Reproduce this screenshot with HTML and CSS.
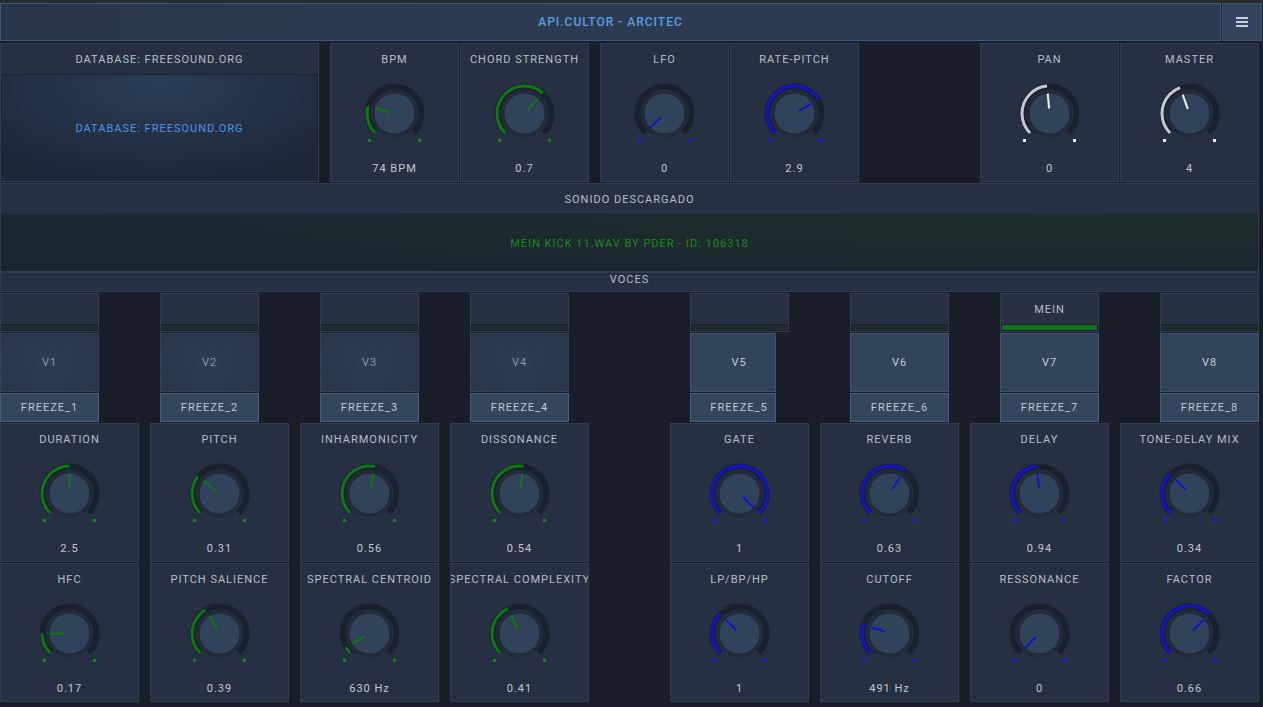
FILE: index.html
```html
<!DOCTYPE html>
<html lang="es">
<head>
<meta charset="utf-8">
<title>API.CULTOR - ARCITEC</title>
<link rel="stylesheet" href="styles.css">
</head>
<body>
<div class="topstrip"></div>
<header class="titlebar">
  <div class="title">API.CULTOR - ARCITEC</div>
  <button class="menu" aria-label="menu">
    <svg width="12" height="10" viewBox="0 0 12 10"><rect x="0" y="0" width="12" height="2"/><rect x="0" y="4" width="12" height="2"/><rect x="0" y="8" width="12" height="2"/></svg>
  </button>
</header>

<section class="row1">
  <div class="panel db">
    <div class="phead">DATABASE: FREESOUND.ORG</div>
    <div class="dbbox">DATABASE: FREESOUND.ORG</div>
  </div>

  <div class="panel kp narrow gap-l green">
    <div class="klabel"><span>BPM</span></div>
    <svg class="knob" viewBox="-40.5 -40.5 81 81" width="81" height="81"><circle class="trk" r="27" pathLength="360" stroke-dasharray="270 360" transform="rotate(135)"/><circle class="band" r="24"/><circle class="val" r="27.5" pathLength="360" stroke-dasharray="60 360" transform="rotate(135)"/><circle class="cap" r="20.5"/><line class="ptr" x1="0" y1="-5" x2="0" y2="-20" transform="rotate(-75)"/><rect class="dot" x="-26.5" y="25.5" width="3" height="3"/><rect class="dot" x="23.5" y="25.5" width="3" height="3"/></svg>
    <div class="kval">74 BPM</div>
  </div>
  <div class="panel kp narrow green">
    <div class="klabel"><span>CHORD STRENGTH</span></div>
    <svg class="knob" viewBox="-40.5 -40.5 81 81" width="81" height="81"><circle class="trk" r="27" pathLength="360" stroke-dasharray="270 360" transform="rotate(135)"/><circle class="band" r="24"/><circle class="val" r="27.5" pathLength="360" stroke-dasharray="177 360" transform="rotate(135)"/><circle class="cap" r="20.5"/><line class="ptr" x1="0" y1="-5" x2="0" y2="-20" transform="rotate(42)"/><rect class="dot" x="-26.5" y="25.5" width="3" height="3"/><rect class="dot" x="23.5" y="25.5" width="3" height="3"/></svg>
    <div class="kval">0.7</div>
  </div>

  <div class="panel kp narrow gap-l blue">
    <div class="klabel"><span>LFO</span></div>
    <svg class="knob" viewBox="-40.5 -40.5 81 81" width="81" height="81"><circle class="trk" r="27" pathLength="360" stroke-dasharray="270 360" transform="rotate(135)"/><circle class="band" r="24"/><circle class="val" r="27.5" pathLength="360" stroke-dasharray="0 360" transform="rotate(135)"/><circle class="cap" r="20.5"/><line class="ptr" x1="0" y1="-5" x2="0" y2="-20" transform="rotate(-135)"/><rect class="dot" x="-26.5" y="25.5" width="3" height="3"/><rect class="dot" x="23.5" y="25.5" width="3" height="3"/></svg>
    <div class="kval">0</div>
  </div>
  <div class="panel kp narrow blue">
    <div class="klabel"><span>RATE-PITCH</span></div>
    <svg class="knob" viewBox="-40.5 -40.5 81 81" width="81" height="81"><circle class="trk" r="27" pathLength="360" stroke-dasharray="270 360" transform="rotate(135)"/><circle class="band" r="24"/><circle class="val" r="27.5" pathLength="360" stroke-dasharray="195 360" transform="rotate(135)"/><circle class="cap" r="20.5"/><line class="ptr" x1="0" y1="-5" x2="0" y2="-20" transform="rotate(60)"/><rect class="dot" x="-26.5" y="25.5" width="3" height="3"/><rect class="dot" x="23.5" y="25.5" width="3" height="3"/></svg>
    <div class="kval">2.9</div>
  </div>

  <div class="panel kp gap-xl white">
    <div class="klabel"><span>PAN</span></div>
    <svg class="knob" viewBox="-40.5 -40.5 81 81" width="81" height="81"><circle class="trk" r="27" pathLength="360" stroke-dasharray="270 360" transform="rotate(135)"/><circle class="band" r="24"/><circle class="val" r="27.5" pathLength="360" stroke-dasharray="130 360" transform="rotate(135)"/><circle class="cap" r="20.5"/><line class="ptr" x1="0" y1="-5" x2="0" y2="-20" transform="rotate(-5)"/><rect class="dot" x="-26.5" y="25.5" width="3" height="3"/><rect class="dot" x="23.5" y="25.5" width="3" height="3"/></svg>
    <div class="kval">0</div>
  </div>
  <div class="panel kp white">
    <div class="klabel"><span>MASTER</span></div>
    <svg class="knob" viewBox="-40.5 -40.5 81 81" width="81" height="81"><circle class="trk" r="27" pathLength="360" stroke-dasharray="270 360" transform="rotate(135)"/><circle class="band" r="24"/><circle class="val" r="27.5" pathLength="360" stroke-dasharray="115 360" transform="rotate(135)"/><circle class="cap" r="20.5"/><line class="ptr" x1="0" y1="-5" x2="0" y2="-20" transform="rotate(-20)"/><rect class="dot" x="-26.5" y="25.5" width="3" height="3"/><rect class="dot" x="23.5" y="25.5" width="3" height="3"/></svg>
    <div class="kval">4</div>
  </div>
</section>

<section class="panel sonido">
  <div class="phead">SONIDO DESCARGADO</div>
  <div class="sbox">MEIN KICK 11.WAV BY PDER - ID: 106318</div>
</section>

<div class="panel voces">VOCES</div>

<section class="voices">
  <div class="voice">
    <div class="vtop"><div class="vname"></div><div class="vbar"></div></div>
    <div class="vbtn off">V1</div>
    <div class="freeze">FREEZE_1</div>
  </div>
  <div class="voice">
    <div class="vtop"><div class="vname"></div><div class="vbar"></div></div>
    <div class="vbtn off">V2</div>
    <div class="freeze">FREEZE_2</div>
  </div>
  <div class="voice">
    <div class="vtop"><div class="vname"></div><div class="vbar"></div></div>
    <div class="vbtn off">V3</div>
    <div class="freeze">FREEZE_3</div>
  </div>
  <div class="voice">
    <div class="vtop"><div class="vname"></div><div class="vbar"></div></div>
    <div class="vbtn off">V4</div>
    <div class="freeze">FREEZE_4</div>
  </div>
  <div class="voice">
    <div class="vtop"><div class="vname"></div><div class="vbar"></div></div>
    <div class="vbtn on short">V5</div>
    <div class="freeze short">FREEZE_5</div>
  </div>
  <div class="voice">
    <div class="vtop"><div class="vname"></div><div class="vbar"></div></div>
    <div class="vbtn on">V6</div>
    <div class="freeze">FREEZE_6</div>
  </div>
  <div class="voice">
    <div class="vtop"><div class="vname">MEIN</div><div class="vbar lit"></div></div>
    <div class="vbtn on">V7</div>
    <div class="freeze">FREEZE_7</div>
  </div>
  <div class="voice">
    <div class="vtop"><div class="vname"></div><div class="vbar"></div></div>
    <div class="vbtn on">V8</div>
    <div class="freeze">FREEZE_8</div>
  </div>
</section>

<section class="knobs">
  <div class="panel kp green">
    <div class="klabel"><span>DURATION</span></div>
    <svg class="knob" viewBox="-40.5 -40.5 81 81" width="81" height="81"><circle class="trk" r="27" pathLength="360" stroke-dasharray="270 360" transform="rotate(135)"/><circle class="band" r="24"/><circle class="val" r="27.5" pathLength="360" stroke-dasharray="135 360" transform="rotate(135)"/><circle class="cap" r="20.5"/><line class="ptr" x1="0" y1="-5" x2="0" y2="-20" transform="rotate(0)"/><rect class="dot" x="-26.5" y="25.5" width="3" height="3"/><rect class="dot" x="23.5" y="25.5" width="3" height="3"/></svg>
    <div class="kval">2.5</div>
  </div>
  <div class="panel kp green">
    <div class="klabel"><span>PITCH</span></div>
    <svg class="knob" viewBox="-40.5 -40.5 81 81" width="81" height="81"><circle class="trk" r="27" pathLength="360" stroke-dasharray="270 360" transform="rotate(135)"/><circle class="band" r="24"/><circle class="val" r="27.5" pathLength="360" stroke-dasharray="83 360" transform="rotate(135)"/><circle class="cap" r="20.5"/><line class="ptr" x1="0" y1="-5" x2="0" y2="-20" transform="rotate(-52)"/><rect class="dot" x="-26.5" y="25.5" width="3" height="3"/><rect class="dot" x="23.5" y="25.5" width="3" height="3"/></svg>
    <div class="kval">0.31</div>
  </div>
  <div class="panel kp green">
    <div class="klabel"><span>INHARMONICITY</span></div>
    <svg class="knob" viewBox="-40.5 -40.5 81 81" width="81" height="81"><circle class="trk" r="27" pathLength="360" stroke-dasharray="270 360" transform="rotate(135)"/><circle class="band" r="24"/><circle class="val" r="27.5" pathLength="360" stroke-dasharray="147 360" transform="rotate(135)"/><circle class="cap" r="20.5"/><line class="ptr" x1="0" y1="-5" x2="0" y2="-20" transform="rotate(12)"/><rect class="dot" x="-26.5" y="25.5" width="3" height="3"/><rect class="dot" x="23.5" y="25.5" width="3" height="3"/></svg>
    <div class="kval">0.56</div>
  </div>
  <div class="panel kp green">
    <div class="klabel"><span>DISSONANCE</span></div>
    <svg class="knob" viewBox="-40.5 -40.5 81 81" width="81" height="81"><circle class="trk" r="27" pathLength="360" stroke-dasharray="270 360" transform="rotate(135)"/><circle class="band" r="24"/><circle class="val" r="27.5" pathLength="360" stroke-dasharray="143 360" transform="rotate(135)"/><circle class="cap" r="20.5"/><line class="ptr" x1="0" y1="-5" x2="0" y2="-20" transform="rotate(8)"/><rect class="dot" x="-26.5" y="25.5" width="3" height="3"/><rect class="dot" x="23.5" y="25.5" width="3" height="3"/></svg>
    <div class="kval">0.54</div>
  </div>
  <div class="panel kp blue after-gap">
    <div class="klabel"><span>GATE</span></div>
    <svg class="knob" viewBox="-40.5 -40.5 81 81" width="81" height="81"><circle class="trk" r="27" pathLength="360" stroke-dasharray="270 360" transform="rotate(135)"/><circle class="band" r="24"/><circle class="val" r="27.5" pathLength="360" stroke-dasharray="270 360" transform="rotate(135)"/><circle class="cap" r="20.5"/><line class="ptr" x1="0" y1="-5" x2="0" y2="-20" transform="rotate(135)"/><rect class="dot" x="-26.5" y="25.5" width="3" height="3"/><rect class="dot" x="23.5" y="25.5" width="3" height="3"/></svg>
    <div class="kval">1</div>
  </div>
  <div class="panel kp blue">
    <div class="klabel"><span>REVERB</span></div>
    <svg class="knob" viewBox="-40.5 -40.5 81 81" width="81" height="81"><circle class="trk" r="27" pathLength="360" stroke-dasharray="270 360" transform="rotate(135)"/><circle class="band" r="24"/><circle class="val" r="27.5" pathLength="360" stroke-dasharray="168 360" transform="rotate(135)"/><circle class="cap" r="20.5"/><line class="ptr" x1="0" y1="-5" x2="0" y2="-20" transform="rotate(33)"/><rect class="dot" x="-26.5" y="25.5" width="3" height="3"/><rect class="dot" x="23.5" y="25.5" width="3" height="3"/></svg>
    <div class="kval">0.63</div>
  </div>
  <div class="panel kp blue">
    <div class="klabel"><span>DELAY</span></div>
    <svg class="knob" viewBox="-40.5 -40.5 81 81" width="81" height="81"><circle class="trk" r="27" pathLength="360" stroke-dasharray="270 360" transform="rotate(135)"/><circle class="band" r="24"/><circle class="val" r="27.5" pathLength="360" stroke-dasharray="129 360" transform="rotate(135)"/><circle class="cap" r="20.5"/><line class="ptr" x1="0" y1="-5" x2="0" y2="-20" transform="rotate(-6)"/><rect class="dot" x="-26.5" y="25.5" width="3" height="3"/><rect class="dot" x="23.5" y="25.5" width="3" height="3"/></svg>
    <div class="kval">0.94</div>
  </div>
  <div class="panel kp blue">
    <div class="klabel"><span>TONE-DELAY MIX</span></div>
    <svg class="knob" viewBox="-40.5 -40.5 81 81" width="81" height="81"><circle class="trk" r="27" pathLength="360" stroke-dasharray="270 360" transform="rotate(135)"/><circle class="band" r="24"/><circle class="val" r="27.5" pathLength="360" stroke-dasharray="90 360" transform="rotate(135)"/><circle class="cap" r="20.5"/><line class="ptr" x1="0" y1="-5" x2="0" y2="-20" transform="rotate(-45)"/><rect class="dot" x="-26.5" y="25.5" width="3" height="3"/><rect class="dot" x="23.5" y="25.5" width="3" height="3"/></svg>
    <div class="kval">0.34</div>
  </div>

  <div class="panel kp green">
    <div class="klabel"><span>HFC</span></div>
    <svg class="knob" viewBox="-40.5 -40.5 81 81" width="81" height="81"><circle class="trk" r="27" pathLength="360" stroke-dasharray="270 360" transform="rotate(135)"/><circle class="band" r="24"/><circle class="val" r="27.5" pathLength="360" stroke-dasharray="45 360" transform="rotate(135)"/><circle class="cap" r="20.5"/><line class="ptr" x1="0" y1="-5" x2="0" y2="-20" transform="rotate(-90)"/><rect class="dot" x="-26.5" y="25.5" width="3" height="3"/><rect class="dot" x="23.5" y="25.5" width="3" height="3"/></svg>
    <div class="kval">0.17</div>
  </div>
  <div class="panel kp green">
    <div class="klabel"><span>PITCH SALIENCE</span></div>
    <svg class="knob" viewBox="-40.5 -40.5 81 81" width="81" height="81"><circle class="trk" r="27" pathLength="360" stroke-dasharray="270 360" transform="rotate(135)"/><circle class="band" r="24"/><circle class="val" r="27.5" pathLength="360" stroke-dasharray="104 360" transform="rotate(135)"/><circle class="cap" r="20.5"/><line class="ptr" x1="0" y1="-5" x2="0" y2="-20" transform="rotate(-31)"/><rect class="dot" x="-26.5" y="25.5" width="3" height="3"/><rect class="dot" x="23.5" y="25.5" width="3" height="3"/></svg>
    <div class="kval">0.39</div>
  </div>
  <div class="panel kp green">
    <div class="klabel"><span>SPECTRAL CENTROID</span></div>
    <svg class="knob" viewBox="-40.5 -40.5 81 81" width="81" height="81"><circle class="trk" r="27" pathLength="360" stroke-dasharray="270 360" transform="rotate(135)"/><circle class="band" r="24"/><circle class="val" r="27.5" pathLength="360" stroke-dasharray="15 360" transform="rotate(135)"/><circle class="cap" r="20.5"/><line class="ptr" x1="0" y1="-5" x2="0" y2="-20" transform="rotate(-120)"/><rect class="dot" x="-26.5" y="25.5" width="3" height="3"/><rect class="dot" x="23.5" y="25.5" width="3" height="3"/></svg>
    <div class="kval">630 Hz</div>
  </div>
  <div class="panel kp green">
    <div class="klabel"><span>SPECTRAL COMPLEXITY</span></div>
    <svg class="knob" viewBox="-40.5 -40.5 81 81" width="81" height="81"><circle class="trk" r="27" pathLength="360" stroke-dasharray="270 360" transform="rotate(135)"/><circle class="band" r="24"/><circle class="val" r="27.5" pathLength="360" stroke-dasharray="110 360" transform="rotate(135)"/><circle class="cap" r="20.5"/><line class="ptr" x1="0" y1="-5" x2="0" y2="-20" transform="rotate(-25)"/><rect class="dot" x="-26.5" y="25.5" width="3" height="3"/><rect class="dot" x="23.5" y="25.5" width="3" height="3"/></svg>
    <div class="kval">0.41</div>
  </div>
  <div class="panel kp blue after-gap">
    <div class="klabel"><span>LP/BP/HP</span></div>
    <svg class="knob" viewBox="-40.5 -40.5 81 81" width="81" height="81"><circle class="trk" r="27" pathLength="360" stroke-dasharray="270 360" transform="rotate(135)"/><circle class="band" r="24"/><circle class="val" r="27.5" pathLength="360" stroke-dasharray="90 360" transform="rotate(135)"/><circle class="cap" r="20.5"/><line class="ptr" x1="0" y1="-5" x2="0" y2="-20" transform="rotate(-45)"/><rect class="dot" x="-26.5" y="25.5" width="3" height="3"/><rect class="dot" x="23.5" y="25.5" width="3" height="3"/></svg>
    <div class="kval">1</div>
  </div>
  <div class="panel kp blue">
    <div class="klabel"><span>CUTOFF</span></div>
    <svg class="knob" viewBox="-40.5 -40.5 81 81" width="81" height="81"><circle class="trk" r="27" pathLength="360" stroke-dasharray="270 360" transform="rotate(135)"/><circle class="band" r="24"/><circle class="val" r="27.5" pathLength="360" stroke-dasharray="65 360" transform="rotate(135)"/><circle class="cap" r="20.5"/><line class="ptr" x1="0" y1="-5" x2="0" y2="-20" transform="rotate(-70)"/><rect class="dot" x="-26.5" y="25.5" width="3" height="3"/><rect class="dot" x="23.5" y="25.5" width="3" height="3"/></svg>
    <div class="kval">491 Hz</div>
  </div>
  <div class="panel kp blue">
    <div class="klabel"><span>RESSONANCE</span></div>
    <svg class="knob" viewBox="-40.5 -40.5 81 81" width="81" height="81"><circle class="trk" r="27" pathLength="360" stroke-dasharray="270 360" transform="rotate(135)"/><circle class="band" r="24"/><circle class="val" r="27.5" pathLength="360" stroke-dasharray="0 360" transform="rotate(135)"/><circle class="cap" r="20.5"/><line class="ptr" x1="0" y1="-5" x2="0" y2="-20" transform="rotate(-135)"/><rect class="dot" x="-26.5" y="25.5" width="3" height="3"/><rect class="dot" x="23.5" y="25.5" width="3" height="3"/></svg>
    <div class="kval">0</div>
  </div>
  <div class="panel kp blue">
    <div class="klabel"><span>FACTOR</span></div>
    <svg class="knob" viewBox="-40.5 -40.5 81 81" width="81" height="81"><circle class="trk" r="27" pathLength="360" stroke-dasharray="270 360" transform="rotate(135)"/><circle class="band" r="24"/><circle class="val" r="27.5" pathLength="360" stroke-dasharray="181 360" transform="rotate(135)"/><circle class="cap" r="20.5"/><line class="ptr" x1="0" y1="-5" x2="0" y2="-20" transform="rotate(46)"/><rect class="dot" x="-26.5" y="25.5" width="3" height="3"/><rect class="dot" x="23.5" y="25.5" width="3" height="3"/></svg>
    <div class="kval">0.66</div>
  </div>
</section>
</body>
</html>
```

FILE: styles.css
```css
* { box-sizing: border-box; }

html, body {
  margin: 0;
  padding: 0;
}

body {
  width: 1263px;
  height: 707px;
  overflow: hidden;
  background: #1a1e29;
  font-family: Roboto, "Liberation Sans", sans-serif;
  font-size: 11px;
  letter-spacing: 1px;
  color: #b8bec7;
}

.topstrip {
  height: 3px;
  background: #2b2a29;
}

.titlebar {
  display: flex;
  gap: 1px;
  height: 38px;
}

.title {
  width: 1221px;
  border: 1px solid #3a5a83;
  background: linear-gradient(90deg, #283548 0%, #2c3b51 45%, #2b3b52 100%);
  color: #5b9de3;
  font-size: 12px;
  font-weight: 500;
  letter-spacing: 1px;
  display: flex;
  align-items: center;
  justify-content: center;
}

.menu {
  width: 40px;
  margin: 0;
  padding: 0;
  border: 1px solid #3d4f69;
  background: #33455e;
  display: flex;
  align-items: center;
  justify-content: center;
}

.menu svg { display: block; fill: #c9ced5; }

.panel {
  background: #263042;
  border: 1px solid #323d51;
}

.phead {
  height: 30px;
  line-height: 31px;
  text-align: center;
  white-space: nowrap;
}

/* first row */
.row1 {
  display: flex;
  gap: 1px;
  margin-top: 2px;
  height: 139px;
}

.db {
  width: 319px;
  display: flex;
  flex-direction: column;
}

.dbbox {
  flex: 1;
  border: 1px solid #1b2230;
  border-bottom: 0;
  background: radial-gradient(ellipse 70% 90% at 50% 10%, #2b3d57 0%, #24334a 45%, #1e2738 100%);
  color: #4b94e2;
  display: flex;
  align-items: center;
  justify-content: center;
}

.gap-l { margin-left: 10px; }
.gap-xl { margin-left: 120px; }

/* knob panels */
.kp {
  width: 139px;
  height: 139px;
  overflow: hidden;
  display: flex;
  flex-direction: column;
  align-items: center;
}

.kp.narrow { width: 129px; }

.klabel {
  width: 100%;
  height: 29px;
  line-height: 31px;
  display: flex;
  justify-content: center;
  white-space: nowrap;
}

.klabel span { flex: none; }

.knob { display: block; flex: none; }

.kval {
  line-height: 29px;
  height: 27px;
  color: #c3c8cf;
}

.knob .trk {
  fill: none;
  stroke: #1b212c;
  stroke-width: 6;
}

.knob .band { fill: #232b3a; }

.knob .val {
  fill: none;
  stroke-width: 3;
}

.knob .cap {
  fill: #31435b;
  stroke: #1f2836;
  stroke-width: 1;
}

.knob .ptr {
  stroke-width: 2;
}

.knob .dot { shape-rendering: crispEdges; }

.green .val, .green .ptr { stroke: #0b7a10; }
.green .dot { fill: #0e8a14; }

.blue .val, .blue .ptr { stroke: #1212d2; }
.blue .dot { fill: #1c1cf0; }

.white .val { stroke: #c5c8cc; }
.white .ptr { stroke: #f2f2f2; }
.white .dot { fill: #eeeeee; }

/* sonido */
.sonido {
  margin-top: 1px;
  width: 1259px;
  height: 89px;
  display: flex;
  flex-direction: column;
}

.sbox {
  flex: 1;
  border: 1px solid #1b2230;
  border-bottom: 0;
  background: radial-gradient(ellipse 80% 120% at 85% 0%, #1d302c 0%, #1d2a2e 60%, #1c2630 100%);
  color: #1b8a1b;
  display: flex;
  align-items: center;
  justify-content: center;
}

.voces {
  width: 1259px;
  height: 20px;
  line-height: 13px;
  text-align: center;
}

/* voices */
.voices {
  margin-top: 1px;
  display: grid;
  grid-template-columns: 99px 61px 99px 61px 99px 51px 99px 121px 99px 61px 99px 51px 99px 61px 99px;
  height: 129px;
}

.voice {
  display: flex;
  flex-direction: column;
  gap: 1px;
}

.voice:nth-child(1) { grid-column: 1; }
.voice:nth-child(2) { grid-column: 3; }
.voice:nth-child(3) { grid-column: 5; }
.voice:nth-child(4) { grid-column: 7; }
.voice:nth-child(5) { grid-column: 9; }
.voice:nth-child(6) { grid-column: 11; }
.voice:nth-child(7) { grid-column: 13; }
.voice:nth-child(8) { grid-column: 15; }

.vtop {
  height: 39px;
  background: #273142;
  border: 1px solid #323d51;
  display: flex;
  flex-direction: column;
}

.vname {
  flex: 1;
  display: flex;
  align-items: center;
  justify-content: center;
  padding-top: 1px;
}

.vbar {
  height: 7px;
  border: 1px solid #19202b;
  background: #1f2d2e;
}

.vbar.lit { background: #12701e; }

.vbtn {
  height: 59px;
  display: flex;
  align-items: center;
  justify-content: center;
}

.vbtn.off {
  border: 1px solid #33415a;
  background: radial-gradient(ellipse at 50% 50%, #2d3d55 0%, #2a3850 50%, #293547 100%);
  color: #8a93a0;
}

.vbtn.on {
  border: 1px solid #41546e;
  background: #32445c;
  color: #c6cbd2;
}

.freeze {
  height: 29px;
  border: 1px solid #4a5e7a;
  background: #33465e;
  color: #c3c8cf;
  display: flex;
  align-items: center;
  justify-content: center;
}

.short {
  width: 86px;
  padding-left: 12px;
  overflow: hidden;
  white-space: nowrap;
}

/* knob grid */
.knobs {
  margin-top: 1px;
  display: grid;
  grid-template-columns: repeat(4, 139px) 59px repeat(4, 139px);
  column-gap: 11px;
  row-gap: 1px;
}

.after-gap { grid-column-start: 6; }
```
